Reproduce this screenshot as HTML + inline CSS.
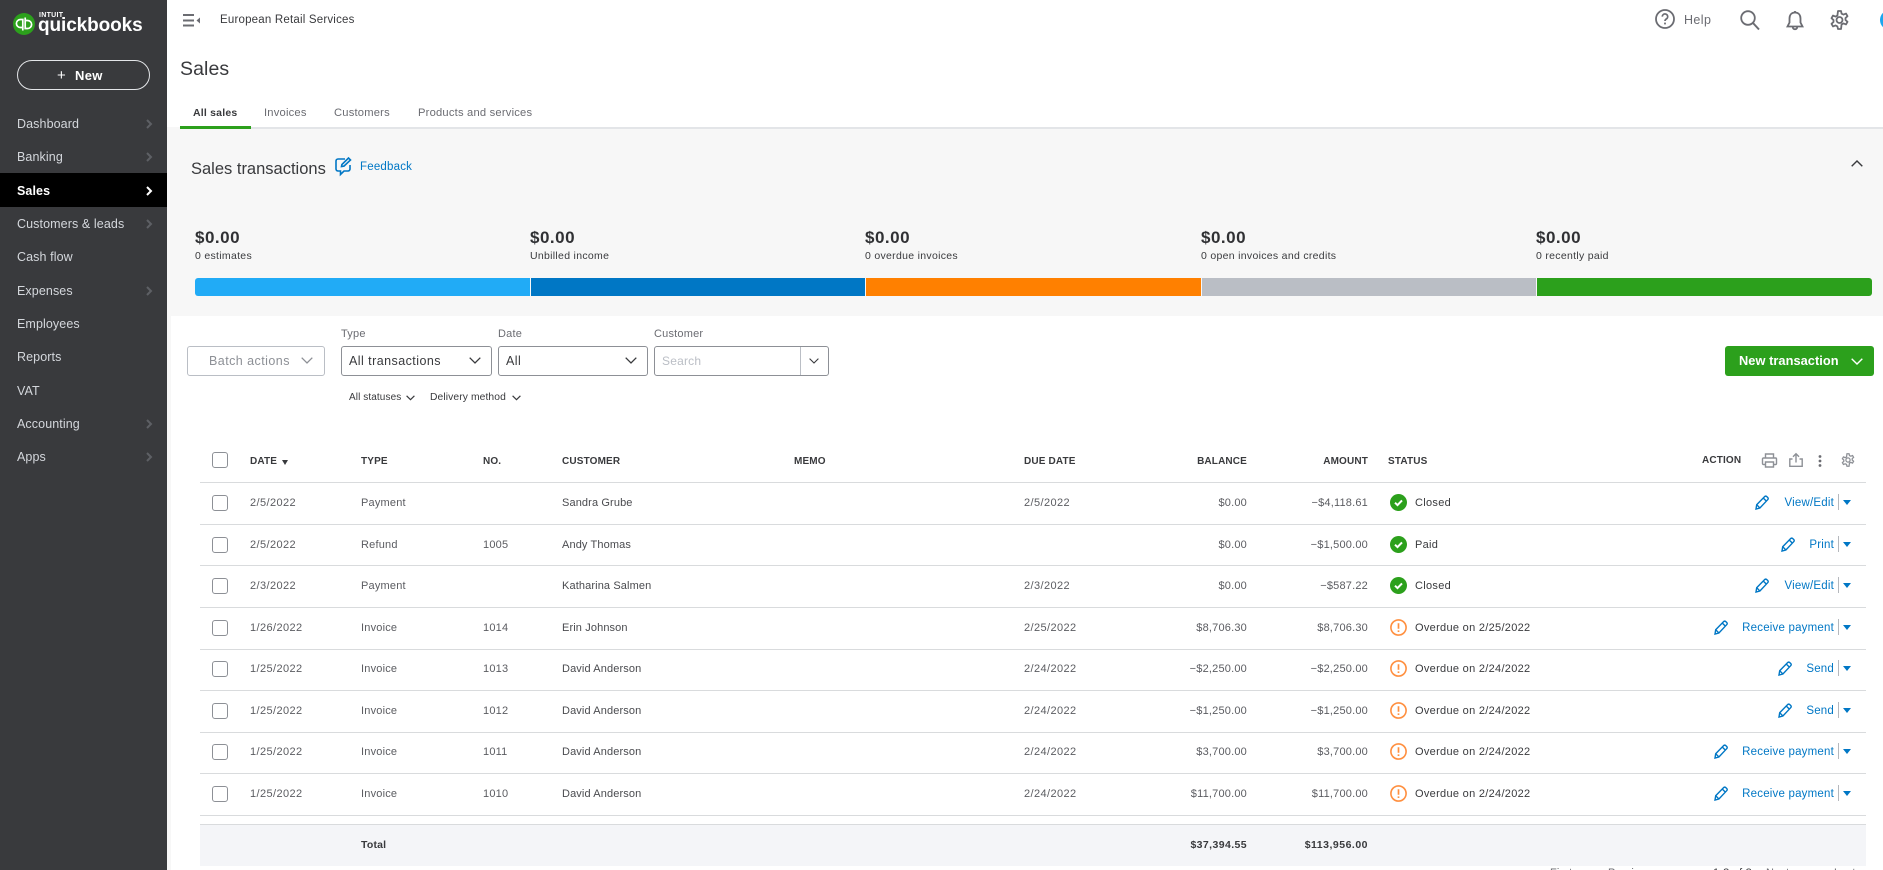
<!DOCTYPE html>
<html lang="en"><head><meta charset="utf-8"><title>Sales</title>
<style>
html,body{margin:0;padding:0;background:#fff;width:1883px;height:870px;overflow:hidden}
#w{position:absolute;left:0;top:0;width:1883px;height:870px;overflow:hidden;font-family:"Liberation Sans",sans-serif;color:#393a3d;font-size:11px;letter-spacing:.2px}
#w div,#w span,#w svg{position:absolute;display:block;white-space:nowrap}
#w svg{overflow:visible;fill:none}
.nav{left:17px;height:20px;line-height:20px;font-size:12.5px;color:#d4d7dc;letter-spacing:.1px}
.chev{left:146px;width:6px;height:10px;stroke:#5e6065;stroke-width:2}
.sum{font-size:17px;font-weight:bold;line-height:20px;height:20px;top:228px;letter-spacing:.5px;color:#303134}
.sub{font-size:10.5px;line-height:14px;height:14px;top:249px;color:#393a3d;letter-spacing:.3px}
.bar{top:278px;height:18px}
.lab{top:326px;font-size:11px;line-height:16px;color:#6b6c72}
.box{top:346px;height:28px;border:1px solid #8d9096;border-radius:3px;background:#fff}
.val{top:353px;font-size:12.5px;line-height:16px;letter-spacing:.45px}
.hd{top:454px;line-height:16px;font-size:10px;font-weight:bold;color:#393a3d;letter-spacing:.15px}
.ln{left:200px;width:1666px;height:1px;background:#d9dbdd}
.r{left:0;width:1883px;height:16px;line-height:16px}
.ck{left:212px;top:0;width:14px;height:14px;border:1.5px solid #8d9096;border-radius:3px;background:#fff}
.d{left:250px;color:#5b5c61;letter-spacing:.4px}.ty{left:361px;color:#5b5c61}.no{left:483px;color:#5b5c61}.cu{left:562px;color:#4a4b4f;letter-spacing:.12px}.du{left:1024px;color:#5b5c61;letter-spacing:.4px}
.ba{right:636px;color:#5b5c61}.am{right:515px;color:#5b5c61}
.st{left:1415px;color:#393a3d;letter-spacing:.3px}
.si{left:1390px;top:-1px;width:17px;height:17px}
.ac{right:49px;color:#0077c5;font-size:11.5px;letter-spacing:.2px}
.pe{top:0;width:14px;height:15px;stroke:#0077c5;stroke-width:1.4}
.dv{left:1838px;top:-1px;width:1px;height:16px;background:#b5b8bd}
.ca{left:1843px;top:5px;width:0;height:0;border-left:4px solid transparent;border-right:4px solid transparent;border-top:5px solid #0077c5}
.tb{top:105px;line-height:16px;font-size:11.2px;color:#6b6c72;letter-spacing:.2px}
.ic{stroke:#6b6c72;stroke-width:1.8}
.th{stroke:#8d9096;stroke-width:1.4}
.dk{stroke:#393a3d;stroke-width:1.2}
.pg{top:866px;font-size:11px;line-height:14px;color:#6b6c72}
.tot{top:837px;font-weight:bold;font-size:10.5px;line-height:16px;color:#393a3d}
</style></head>
<body>
<div id="w">
<svg width="0" height="0" style="left:0;top:0"><defs>
<symbol id="pen" viewBox="0 0 14 15"><path d="M1 14l.7-4.3L9.6 1.6a1.6 1.6 0 0 1 2.2 0l.9.9a1.6 1.6 0 0 1 0 2.2L4.9 13z"/><path d="M1.7 9.7l3.2 3.3M8.2 3l3.3 3.2"/></symbol>
<symbol id="ok" viewBox="0 0 17 17"><circle cx="8.5" cy="8.5" r="8.5" fill="#2ca01c" stroke="none"/><path d="M5 8.7l2.5 2.4L12 6.4" stroke="#fff" stroke-width="2" fill="none"/></symbol>
<symbol id="ov" viewBox="0 0 17 17"><circle cx="8.5" cy="8.5" r="7.6" fill="#fff" stroke="#ff8f3f" stroke-width="1.6"/><path d="M8.5 4.2v5.6M8.5 11.4v1.6" stroke="#ff8f3f" stroke-width="1.7" fill="none"/></symbol>
</defs></svg>

<!-- sidebar -->
<div style="left:0;top:0;width:167px;height:870px;background:#393a3d"></div>
<svg style="left:13px;top:13px" width="22" height="22" viewBox="0 0 22 22"><circle cx="11" cy="11" r="11" fill="#2ca01c"/><path d="M9.8 17.5V6.5H7.4a4 4 0 0 0 0 8h2.4M12.2 4.5v11h2.4a4 4 0 0 0 0-8h-2.4" stroke="#fff" stroke-width="1.7"/></svg>
<span style="left:39px;top:12px;font-size:7px;font-weight:bold;line-height:8px;color:#fff;letter-spacing:.3px">INTUIT</span>
<span style="left:38px;top:15px;font-size:19px;font-weight:bold;line-height:22px;color:#fff;letter-spacing:-.1px">quickbooks</span>
<div style="left:17px;top:60px;width:131px;height:28px;border:1.5px solid #e3e5e8;border-radius:15px"></div>
<span style="left:57px;top:67px;font-size:15px;line-height:18px;color:#fff">+</span>
<span style="left:75px;top:68px;font-size:13px;font-weight:bold;line-height:16px;color:#fff;letter-spacing:.3px">New</span>

<span class="nav" style="top:114px">Dashboard</span><svg class="chev" style="top:119px" viewBox="0 0 6 10"><path d="M1 1l4 4-4 4"/></svg>
<span class="nav" style="top:147px">Banking</span><svg class="chev" style="top:152px" viewBox="0 0 6 10"><path d="M1 1l4 4-4 4"/></svg>
<div style="left:0;top:173px;width:167px;height:34px;background:#000"></div>
<span class="nav" style="top:181px;color:#fff;font-weight:bold">Sales</span><svg class="chev" style="top:186px;stroke:#fff" viewBox="0 0 6 10"><path d="M1 1l4 4-4 4"/></svg>
<span class="nav" style="top:214px">Customers &amp; leads</span><svg class="chev" style="top:219px" viewBox="0 0 6 10"><path d="M1 1l4 4-4 4"/></svg>
<span class="nav" style="top:247px">Cash flow</span>
<span class="nav" style="top:281px">Expenses</span><svg class="chev" style="top:286px" viewBox="0 0 6 10"><path d="M1 1l4 4-4 4"/></svg>
<span class="nav" style="top:314px">Employees</span>
<span class="nav" style="top:347px">Reports</span>
<span class="nav" style="top:381px">VAT</span>
<span class="nav" style="top:414px">Accounting</span><svg class="chev" style="top:419px" viewBox="0 0 6 10"><path d="M1 1l4 4-4 4"/></svg>
<span class="nav" style="top:447px">Apps</span><svg class="chev" style="top:452px" viewBox="0 0 6 10"><path d="M1 1l4 4-4 4"/></svg>

<!-- top bar -->
<svg style="left:183px;top:14px" width="18" height="13" viewBox="0 0 18 13"><path d="M0 1h11M0 6.5h11M0 11.5h11" stroke="#6b6c72" stroke-width="2"/><path d="M17 3.5v6l-3.5-3z" fill="#6b6c72"/></svg>
<span style="left:220px;top:12px;font-size:11.5px;line-height:16px;color:#393a3d;letter-spacing:.2px">European Retail Services</span>
<svg class="ic" style="left:1655px;top:9px" width="20" height="20" viewBox="0 0 20 20"><circle cx="10" cy="10" r="9"/><path d="M7.3 7.6a2.7 2.7 0 1 1 4 2.400c-1 .6-1.300 1-1.300 2" stroke-width="1.7"/><path d="M10 13.6v1.800" stroke-width="1.8"/></svg>
<span style="left:1684px;top:12px;font-size:12.5px;line-height:16px;color:#6b6c72;letter-spacing:.4px">Help</span>
<svg class="ic" style="left:1740px;top:10px" width="20" height="20" viewBox="0 0 20 20"><circle cx="8" cy="8" r="6.8"/><path d="M13 13l6 6.5" stroke-width="2"/></svg>
<svg class="ic" style="left:1786px;top:10px" width="18" height="21" viewBox="0 0 18 21"><path d="M9 1v1.500M9 2.500c-3.500 0-5.500 2.500-5.500 6v4L1.500 16.500h15l-2-4v-4c0-3.500-2-6-5.500-6zM6.800 17c0 3 4.400 3 4.400 0"/></svg>
<svg class="ic" style="left:1830px;top:10px" width="19" height="20" viewBox="0 0 19 20"><path d="M8 1h3l.6 2.700 1.900.9 2.500-1 1.500 2.600-2 1.800v2l2 1.800-1.500 2.600-2.500-1-1.900 1L11 19H8l-.6-2.600-1.900-1-2.500 1L1.500 13.800l2-1.800v-2l-2-1.800L3 5.600l2.500 1 1.900-1z" stroke-linejoin="round"/><circle cx="9.5" cy="10" r="3"/></svg>
<div style="left:1880px;top:10px;width:20px;height:20px;border-radius:50%;background:#1ba6ef"></div>

<span style="left:180px;top:57px;font-size:19.5px;line-height:24px;color:#393a3d;letter-spacing:.1px">Sales</span>
<span class="tb" style="left:193px;color:#393a3d;font-weight:bold;font-size:10.5px;letter-spacing:.2px">All sales</span>
<span class="tb" style="left:264px">Invoices</span>
<span class="tb" style="left:334px">Customers</span>
<span class="tb" style="left:418px">Products and services</span>

<!-- gray band -->
<div style="left:167px;top:127px;width:1716px;height:189px;background:#f7f7f7"></div>
<div style="left:167px;top:316px;width:4px;height:554px;background:#f7f7f7"></div>
<div style="left:180px;top:127px;width:1703px;height:2px;background:#e3e5e8"></div>
<div style="left:180px;top:126px;width:71px;height:3px;background:#2ca01c"></div>

<span style="left:191px;top:159px;font-size:16.5px;line-height:20px;color:#393a3d;letter-spacing:0">Sales transactions</span>
<svg style="left:335px;top:157px" width="18" height="19" viewBox="0 0 18 19" stroke="#0077c5" stroke-width="1.6"><path d="M15 8v4a2 2 0 0 1-2 2H9l-3.500 3.500V14H3a2 2 0 0 1-2-2V4a2 2 0 0 1 2-2h7"/><path d="M6.500 9.500l.4-2L13.500 1l2 2-6.500 6.100z"/></svg>
<span style="left:360px;top:159px;font-size:11.5px;line-height:16px;color:#0077c5;letter-spacing:.2px">Feedback</span>
<svg style="left:1851px;top:160px" width="12" height="7" viewBox="0 0 12 7"><path d="M.7 6.300L6 1l5.300 5.300" stroke="#393a3d" stroke-width="1.4"/></svg>

<span class="sum" style="left:195px">$0.00</span><span class="sub" style="left:195px">0 estimates</span>
<span class="sum" style="left:530px">$0.00</span><span class="sub" style="left:530px">Unbilled income</span>
<span class="sum" style="left:865px">$0.00</span><span class="sub" style="left:865px">0 overdue invoices</span>
<span class="sum" style="left:1201px">$0.00</span><span class="sub" style="left:1201px">0 open invoices and credits</span>
<span class="sum" style="left:1536px">$0.00</span><span class="sub" style="left:1536px">0 recently paid</span>
<div class="bar" style="left:195px;width:335px;background:#21abf6;border-radius:3px 0 0 3px"></div>
<div class="bar" style="left:531px;width:334px;background:#0077c5"></div>
<div class="bar" style="left:866px;width:335px;background:#ff8000"></div>
<div class="bar" style="left:1202px;width:334px;background:#babec5"></div>
<div class="bar" style="left:1537px;width:335px;background:#2ca01c;border-radius:0 3px 3px 0"></div>

<!-- filters -->
<span class="lab" style="left:341px">Type</span><span class="lab" style="left:498px">Date</span><span class="lab" style="left:654px">Customer</span>
<div class="box" style="left:187px;width:136px;border-color:#babec5"></div>
<span class="val" style="left:209px;color:#8d9096">Batch actions</span>
<svg style="left:301px;top:357px" width="12" height="7" viewBox="0 0 12 7"><path d="M.7.700L6 6l5.300-5.300" stroke="#8d9096" stroke-width="1.300"/></svg>
<div class="box" style="left:341px;width:149px"></div>
<span class="val" style="left:349px">All transactions</span>
<svg style="left:469px;top:357px" width="12" height="7" viewBox="0 0 12 7"><path d="M.7.700L6 6l5.300-5.300" stroke="#393a3d" stroke-width="1.300"/></svg>
<div class="box" style="left:498px;width:148px"></div>
<span class="val" style="left:506px">All</span>
<svg style="left:625px;top:357px" width="12" height="7" viewBox="0 0 12 7"><path d="M.7.700L6 6l5.300-5.300" stroke="#393a3d" stroke-width="1.300"/></svg>
<div class="box" style="left:654px;width:173px"></div>
<div style="left:800px;top:347px;width:1px;height:28px;background:#babec5"></div>
<span class="val" style="left:662px;color:#babec5;font-size:12px;letter-spacing:.2px">Search</span>
<svg style="left:809px;top:358px" width="10" height="6" viewBox="0 0 10 6"><path d="M.6.600L5 5 9.400.600" stroke="#393a3d" stroke-width="1.100"/></svg>

<span style="left:349px;top:390px;font-size:10px;line-height:16px;color:#393a3d;letter-spacing:.1px">All statuses</span>
<svg class="dk" style="left:406px;top:395px" width="9" height="6" viewBox="0 0 9 6"><path d="M.6.800L4.500 4.700 8.400.800"/></svg>
<span style="left:430px;top:390px;font-size:10.3px;line-height:16px;color:#393a3d;letter-spacing:.1px">Delivery method</span>
<svg class="dk" style="left:512px;top:395px" width="9" height="6" viewBox="0 0 9 6"><path d="M.6.800L4.500 4.700 8.400.800"/></svg>

<div style="left:1725px;top:346px;width:149px;height:30px;border-radius:3px;background:#2ca01c"></div>
<span style="left:1739px;top:353px;font-size:12.8px;font-weight:bold;line-height:16px;color:#fff;letter-spacing:.05px">New transaction</span>
<svg style="left:1851px;top:358px" width="12" height="7" viewBox="0 0 12 7"><path d="M.7.700L6 6l5.300-5.300" stroke="#fff" stroke-width="1.400"/></svg>

<!-- table header -->
<div class="ck" style="left:212px;top:452px"></div>
<span class="hd" style="left:250px">DATE</span>
<div style="left:282px;top:460px;width:0;height:0;border-left:3px solid transparent;border-right:3px solid transparent;border-top:5px solid #393a3d"></div>
<span class="hd" style="left:361px">TYPE</span>
<span class="hd" style="left:483px">NO.</span>
<span class="hd" style="left:562px">CUSTOMER</span>
<span class="hd" style="left:794px">MEMO</span>
<span class="hd" style="left:1024px">DUE DATE</span>
<span class="hd" style="right:636px">BALANCE</span>
<span class="hd" style="right:515px">AMOUNT</span>
<span class="hd" style="left:1388px">STATUS</span>
<span class="hd" style="left:1702px;top:453px">ACTION</span>
<svg class="th" style="left:1762px;top:453px" width="15" height="15" viewBox="0 0 15 15"><path d="M3.500 5V1h8v4M3.500 11.500H1.500a1 1 0 0 1-1-1V6a1 1 0 0 1 1-1h12a1 1 0 0 1 1 1v4.500a1 1 0 0 1-1 1h-2M3.500 9h8v5h-8z"/></svg>
<svg class="th" style="left:1789px;top:453px" width="14" height="14" viewBox="0 0 14 14"><path d="M7 9.500V1M4 3.800L7 .8l3 3M3.500 6H.8v7.300h12.400V6h-2.700"/></svg>
<svg style="left:1818px;top:455px" width="4" height="12" viewBox="0 0 4 12"><circle cx="2" cy="1.500" r="1.400" fill="#6b6c72"/><circle cx="2" cy="6" r="1.400" fill="#6b6c72"/><circle cx="2" cy="10.500" r="1.400" fill="#6b6c72"/></svg>
<svg class="th" style="left:1841px;top:453px" width="14" height="14" viewBox="0 0 19 20"><path d="M8 1h3l.6 2.700 1.900.9 2.500-1 1.500 2.600-2 1.800v2l2 1.800-1.500 2.600-2.500-1-1.900 1L11 19H8l-.6-2.600-1.900-1-2.500 1L1.500 13.800l2-1.800v-2l-2-1.800L3 5.600l2.500 1 1.900-1z" stroke-width="1.800"/><circle cx="9.500" cy="10" r="3" stroke-width="1.800"/></svg>

<div class="ln" style="top:482px"></div><div class="ln" style="top:524px"></div><div class="ln" style="top:565px"></div><div class="ln" style="top:607px"></div><div class="ln" style="top:649px"></div><div class="ln" style="top:690px"></div><div class="ln" style="top:732px"></div><div class="ln" style="top:773px"></div><div class="ln" style="top:815px"></div>

<!-- rows -->
<div class="r" style="top:495px"><div class="ck"></div><span class="d">2/5/2022</span><span class="ty">Payment</span><span class="cu">Sandra Grube</span><span class="du">2/5/2022</span><span class="ba">$0.00</span><span class="am">−$4,118.61</span><svg class="si"><use href="#ok"/></svg><span class="st">Closed</span><svg class="pe" style="left:1755px"><use href="#pen"/></svg><span class="ac">View/Edit</span><div class="dv"></div><div class="ca"></div></div>
<div class="r" style="top:537px"><div class="ck"></div><span class="d">2/5/2022</span><span class="ty">Refund</span><span class="no">1005</span><span class="cu">Andy Thomas</span><span class="ba">$0.00</span><span class="am">−$1,500.00</span><svg class="si"><use href="#ok"/></svg><span class="st">Paid</span><svg class="pe" style="left:1781px"><use href="#pen"/></svg><span class="ac">Print</span><div class="dv"></div><div class="ca"></div></div>
<div class="r" style="top:578px"><div class="ck"></div><span class="d">2/3/2022</span><span class="ty">Payment</span><span class="cu">Katharina Salmen</span><span class="du">2/3/2022</span><span class="ba">$0.00</span><span class="am">−$587.22</span><svg class="si"><use href="#ok"/></svg><span class="st">Closed</span><svg class="pe" style="left:1755px"><use href="#pen"/></svg><span class="ac">View/Edit</span><div class="dv"></div><div class="ca"></div></div>
<div class="r" style="top:620px"><div class="ck"></div><span class="d">1/26/2022</span><span class="ty">Invoice</span><span class="no">1014</span><span class="cu">Erin Johnson</span><span class="du">2/25/2022</span><span class="ba">$8,706.30</span><span class="am">$8,706.30</span><svg class="si"><use href="#ov"/></svg><span class="st">Overdue on 2/25/2022</span><svg class="pe" style="left:1714px"><use href="#pen"/></svg><span class="ac">Receive payment</span><div class="dv"></div><div class="ca"></div></div>
<div class="r" style="top:661px"><div class="ck"></div><span class="d">1/25/2022</span><span class="ty">Invoice</span><span class="no">1013</span><span class="cu">David Anderson</span><span class="du">2/24/2022</span><span class="ba">−$2,250.00</span><span class="am">−$2,250.00</span><svg class="si"><use href="#ov"/></svg><span class="st">Overdue on 2/24/2022</span><svg class="pe" style="left:1778px"><use href="#pen"/></svg><span class="ac">Send</span><div class="dv"></div><div class="ca"></div></div>
<div class="r" style="top:703px"><div class="ck"></div><span class="d">1/25/2022</span><span class="ty">Invoice</span><span class="no">1012</span><span class="cu">David Anderson</span><span class="du">2/24/2022</span><span class="ba">−$1,250.00</span><span class="am">−$1,250.00</span><svg class="si"><use href="#ov"/></svg><span class="st">Overdue on 2/24/2022</span><svg class="pe" style="left:1778px"><use href="#pen"/></svg><span class="ac">Send</span><div class="dv"></div><div class="ca"></div></div>
<div class="r" style="top:744px"><div class="ck"></div><span class="d">1/25/2022</span><span class="ty">Invoice</span><span class="no">1011</span><span class="cu">David Anderson</span><span class="du">2/24/2022</span><span class="ba">$3,700.00</span><span class="am">$3,700.00</span><svg class="si"><use href="#ov"/></svg><span class="st">Overdue on 2/24/2022</span><svg class="pe" style="left:1714px"><use href="#pen"/></svg><span class="ac">Receive payment</span><div class="dv"></div><div class="ca"></div></div>
<div class="r" style="top:786px"><div class="ck"></div><span class="d">1/25/2022</span><span class="ty">Invoice</span><span class="no">1010</span><span class="cu">David Anderson</span><span class="du">2/24/2022</span><span class="ba">$11,700.00</span><span class="am">$11,700.00</span><svg class="si"><use href="#ov"/></svg><span class="st">Overdue on 2/24/2022</span><svg class="pe" style="left:1714px"><use href="#pen"/></svg><span class="ac">Receive payment</span><div class="dv"></div><div class="ca"></div></div>

<!-- total -->
<div style="left:200px;top:824px;width:1666px;height:42px;background:#f4f5f8;border-top:1px solid #d9dbdd;box-sizing:border-box"></div>
<span class="tot" style="left:361px">Total</span>
<span class="tot" style="right:636px;letter-spacing:.4px">$37,394.55</span>
<span class="tot" style="right:515px;letter-spacing:.5px">$113,956.00</span>

<span class="pg" style="left:1550px">First</span>
<span class="pg" style="left:1608px">Previous</span>
<span class="pg" style="left:1713px;color:#393a3d">1-8 of 8</span>
<span class="pg" style="left:1766px">Next</span>
<span class="pg" style="left:1834px">Last</span>
</div>
</body></html>
